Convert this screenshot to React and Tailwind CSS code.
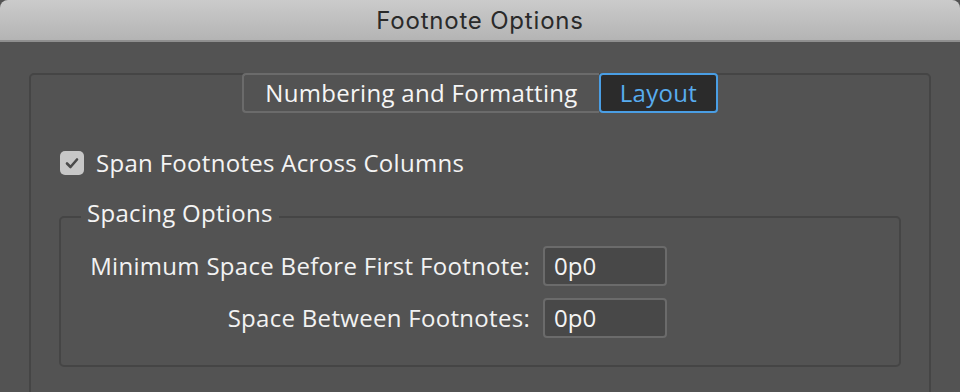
import React from 'react';

const Field = ({ label, value }) => (
  <div className="flex items-center">
    <div className="w-[469px] text-right text-[24px] tracking-[0.3px] text-[#f2f2f2] leading-none">{label}</div>
    <div className="ml-[13px] w-[124px] h-[40px] rounded-[4px] border-2 border-[#6b6b6b] bg-[#484848] flex items-center pl-[9px] text-[24px] text-[#f4f4f4]">
      {value}
    </div>
  </div>
);

export default function App() {
  return (
    <div className="w-[960px] h-[392px] overflow-hidden bg-[#535353] font-['Open_Sans',sans-serif] font-medium">
      {/* title bar */}
      <div className="h-[42px] pt-[2px] bg-gradient-to-b from-[#cbcbcb] to-[#b4b4b4] border-b-2 border-[#8f8f8f] flex items-center justify-center rounded-t-[8px]">
        <span className="text-[24px] text-[#2a2a2a] font-['Inter',sans-serif] font-normal tracking-[0.8px]">Footnote Options</span>
      </div>

      <div className="pl-[29px] pr-[29px] pt-[31px]">
        <div className="h-[400px] rounded-[5px] border-2 border-[#454545]">
          {/* tabs */}
          <div className="flex justify-center -mt-[2px]">
            <div className="flex h-[40px]">
              <div className="w-[357px] rounded-l-[4px] border-2 border-r-0 border-[#6b6b6b] bg-[#535353] flex items-center justify-center text-[24px] tracking-[0.3px] text-[#f6f6f6]">
                Numbering and Formatting
              </div>
              <div className="w-[119px] rounded-[4px] border-2 border-[#4a9ee4] bg-[#2b2b2b] flex items-center justify-center text-[24px] tracking-[0.3px] text-[#58acef]">
                Layout
              </div>
            </div>
          </div>

          {/* checkbox */}
          <div className="flex items-center mt-[32px] ml-[29px]">
            <div className="w-[24px] h-[24px] rounded-[5px] bg-[#c7c7c7] flex items-center justify-center">
              <svg width="18" height="18" viewBox="0 0 18 18" fill="none">
                <path d="M4 9.5 L7.5 13 L14 5.5" stroke="#4a4a4a" strokeWidth="2.6" strokeLinecap="round" strokeLinejoin="round" />
              </svg>
            </div>
            <span className="ml-[12px] text-[24px] tracking-[0.3px] text-[#f4f4f4]">Span Footnotes Across Columns</span>
          </div>

          {/* spacing options group */}
          <div className="relative mt-[35px] mx-[28px] rounded-[5px] border-2 border-[#454545] pt-[28px] pb-[27px] flex flex-col gap-[12px]">
            <span className="absolute -top-[22px] left-[20px] bg-[#535353] px-[6px] text-[24px] leading-[34px] tracking-[0.3px] text-[#f4f4f4]">
              Spacing Options
            </span>
            <Field label="Minimum Space Before First Footnote:" value="0p0" />
            <Field label="Space Between Footnotes:" value="0p0" />
          </div>
        </div>
      </div>
    </div>
  );
}
